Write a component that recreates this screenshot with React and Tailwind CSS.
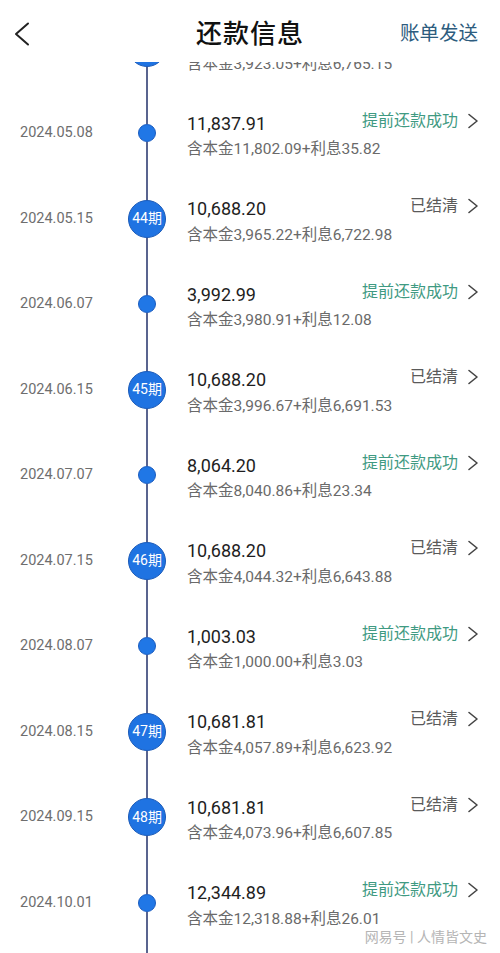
import React from "react";

const rows = [
  { p: 43, d: "2024.04.15", a: "10,688.20", b: "3,923.05", i: "6,765.15", s: "done" },
  { p: null, d: "2024.05.08", a: "11,837.91", b: "11,802.09", i: "35.82", s: "early" },
  { p: 44, d: "2024.05.15", a: "10,688.20", b: "3,965.22", i: "6,722.98", s: "done" },
  { p: null, d: "2024.06.07", a: "3,992.99", b: "3,980.91", i: "12.08", s: "early" },
  { p: 45, d: "2024.06.15", a: "10,688.20", b: "3,996.67", i: "6,691.53", s: "done" },
  { p: null, d: "2024.07.07", a: "8,064.20", b: "8,040.86", i: "23.34", s: "early" },
  { p: 46, d: "2024.07.15", a: "10,688.20", b: "4,044.32", i: "6,643.88", s: "done" },
  { p: null, d: "2024.08.07", a: "1,003.03", b: "1,000.00", i: "3.03", s: "early" },
  { p: 47, d: "2024.08.15", a: "10,681.81", b: "4,057.89", i: "6,623.92", s: "done" },
  { p: 48, d: "2024.09.15", a: "10,681.81", b: "4,073.96", i: "6,607.85", s: "done" },
  { p: null, d: "2024.10.01", a: "12,344.89", b: "12,318.88", i: "26.01", s: "early" },
  { p: 49, d: "2024.10.15", a: "10,681.81", b: "4,090.15", i: "6,591.66", s: "done" },
];

function Chevron() {
  return (
    <svg width="14" height="16" viewBox="0 0 14 16" fill="none">
      <path d="M3 1.5 L11 8 L3 14.5" stroke="#444" strokeWidth="1.6" strokeLinecap="round" strokeLinejoin="round" />
    </svg>
  );
}

function Row({ r }) {
  return (
    <div className="flex h-[85.5px]">
      <div className="w-[128px] pl-5 flex items-center text-[14.5px] text-[#6e6e6e]">{r.d}</div>
      <div className="w-[38px] flex flex-col items-center">
        <div className="flex-1 w-[2px] bg-[#59648f]" />
        {r.p ? (
          <div className="w-[38px] h-[38px] rounded-full bg-[#1f73e2] border border-[#1a5ab8] text-white text-[14px] flex items-center justify-center">
            {r.p}期
          </div>
        ) : (
          <div className="w-[18px] h-[18px] rounded-full bg-[#2077e6] border border-[#1a5cc0]" />
        )}
        <div className="flex-1 w-[2px] bg-[#59648f]" />
      </div>
      <div className="flex-1 pl-[21px] pr-5 flex flex-col justify-center pt-2">
        <div className="flex items-center justify-between h-6">
          <span className="text-[18px] text-[#1e1e1e]">{r.a}</span>
          <span className="flex items-center gap-[8px] -mt-[5px]">
            {r.s === "early" ? (
              <span className="text-[16px] text-[#3f9a82]">提前还款成功</span>
            ) : (
              <span className="text-[16px] text-[#5a5a5a]">已结清</span>
            )}
            <Chevron />
          </span>
        </div>
        <div className="text-[15.5px] leading-[28px] text-[#6a6a6a]">
          含本金{r.b}+利息{r.i}
        </div>
      </div>
    </div>
  );
}

export default function App() {
  return (
    <div
      className="relative w-[500px] h-[953px] overflow-hidden bg-white flex flex-col"
      style={{ fontFamily: 'Roboto, "Noto Sans CJK SC", "Noto Sans", sans-serif' }}
    >
      <div className="h-[62px] pt-[6px] grid grid-cols-[1fr_auto_1fr] items-center shrink-0 bg-white">
        <div className="pl-[14px] flex items-center">
          <svg width="16" height="24" viewBox="0 0 16 24" fill="none">
            <path d="M14 1.5 L2 12 L14 22.5" stroke="#222" strokeWidth="2" strokeLinecap="round" strokeLinejoin="round" />
          </svg>
        </div>
        <div className="text-[26px] font-medium text-[#111] tracking-[1px]">还款信息</div>
        <div className="flex justify-end pr-[22px] text-[19.5px] text-[#2d5c7e]">账单发送</div>
      </div>
      <div className="flex-1 overflow-hidden">
        <div className="-mt-[57.25px]">
          {rows.map((r) => (
            <Row key={r.d} r={r} />
          ))}
        </div>
      </div>
      <div className="absolute right-[13px] bottom-[5px] text-[14px] text-[#b5b5b5]">
        网易号 | 人情皆文史
      </div>
    </div>
  );
}
